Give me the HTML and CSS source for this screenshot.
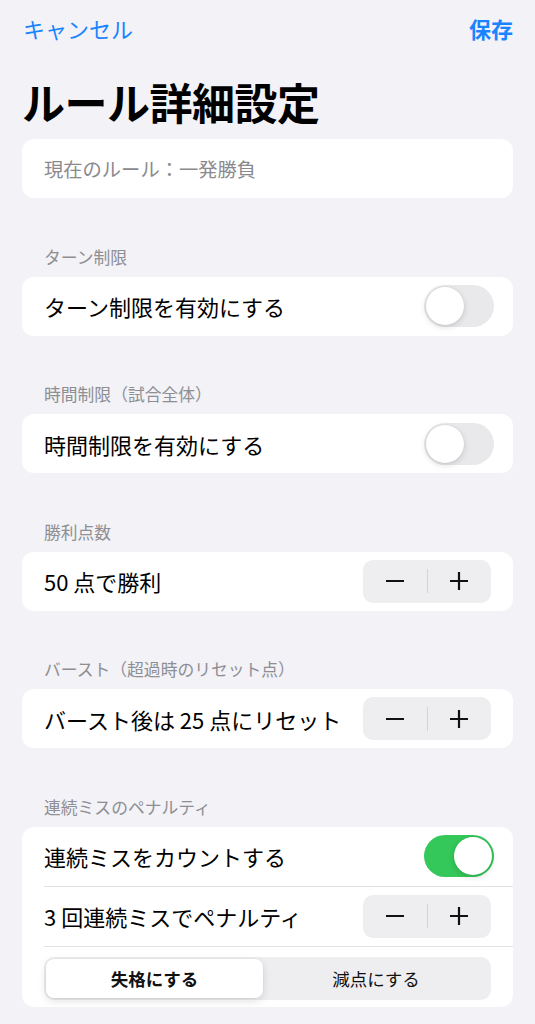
FILE: index.html
```html
<!DOCTYPE html>
<html lang="ja">
<head>
<meta charset="utf-8">
<title>ルール詳細設定</title>
<link rel="stylesheet" href="styles.css">
</head>
<body>
<div class="screen">
  <nav class="nav">
    <span class="nav-btn">キャンセル</span>
    <span class="nav-btn nav-save">保存</span>
  </nav>
  <h1 class="title">ルール詳細設定</h1>

  <div class="card">
    <div class="row"><span class="note">現在のルール：一発勝負</span></div>
  </div>

  <div class="section-label">ターン制限</div>
  <div class="card">
    <div class="row">
      <span class="label">ターン制限を有効にする</span>
      <span class="toggle"><span class="knob"></span></span>
    </div>
  </div>

  <div class="section-label">時間制限（試合全体）</div>
  <div class="card">
    <div class="row">
      <span class="label">時間制限を有効にする</span>
      <span class="toggle"><span class="knob"></span></span>
    </div>
  </div>

  <div class="section-label">勝利点数</div>
  <div class="card">
    <div class="row">
      <span class="label">50 点で勝利</span>
      <span class="stepper">
        <span class="step"><svg width="20" height="20" viewBox="0 0 20 20"><line x1="1" y1="10" x2="19" y2="10"/></svg></span>
        <span class="step-div"></span>
        <span class="step"><svg width="20" height="20" viewBox="0 0 20 20"><line x1="1" y1="10" x2="19" y2="10"/><line x1="10" y1="1" x2="10" y2="19"/></svg></span>
      </span>
    </div>
  </div>

  <div class="section-label">バースト（超過時のリセット点）</div>
  <div class="card">
    <div class="row">
      <span class="label">バースト後は 25 点にリセット</span>
      <span class="stepper">
        <span class="step"><svg width="20" height="20" viewBox="0 0 20 20"><line x1="1" y1="10" x2="19" y2="10"/></svg></span>
        <span class="step-div"></span>
        <span class="step"><svg width="20" height="20" viewBox="0 0 20 20"><line x1="1" y1="10" x2="19" y2="10"/><line x1="10" y1="1" x2="10" y2="19"/></svg></span>
      </span>
    </div>
  </div>

  <div class="section-label">連続ミスのペナルティ</div>
  <div class="card">
    <div class="row row-div">
      <span class="label">連続ミスをカウントする</span>
      <span class="toggle on"><span class="knob"></span></span>
    </div>
    <div class="row row-div">
      <span class="label">3 回連続ミスでペナルティ</span>
      <span class="stepper">
        <span class="step"><svg width="20" height="20" viewBox="0 0 20 20"><line x1="1" y1="10" x2="19" y2="10"/></svg></span>
        <span class="step-div"></span>
        <span class="step"><svg width="20" height="20" viewBox="0 0 20 20"><line x1="1" y1="10" x2="19" y2="10"/><line x1="10" y1="1" x2="10" y2="19"/></svg></span>
      </span>
    </div>
    <div class="seg-row">
      <div class="segmented">
        <span class="seg seg-on">失格にする</span>
        <span class="seg">減点にする</span>
      </div>
    </div>
  </div>
</div>
</body>
</html>
```

FILE: styles.css
```css
* { box-sizing: border-box; }
html, body {
  margin: 0;
  padding: 0;
  background: #f2f2f7;
}
body {
  font-family: "Noto Sans CJK JP", "Noto Sans", sans-serif;
  color: #000;
}
.screen {
  padding: 0 22px;
}
.nav {
  height: 56px;
  display: flex;
  align-items: center;
  justify-content: space-between;
  padding: 0 0 0 1px;
}
.nav-btn {
  font-size: 22px;
  line-height: 28px;
  color: #1a84ff;
}
.nav-save {
  font-weight: 700;
}
.title {
  margin: 20px 0 0 0;
  font-size: 43px;
  line-height: 50px;
  font-weight: 700;
  letter-spacing: -0.5px;
}
.card {
  margin-top: 13px;
  background: #fff;
  border-radius: 12px;
  overflow: hidden;
}
.section-label + .card {
  margin-top: 10px;
}
.row {
  height: 59px;
  display: flex;
  align-items: center;
  justify-content: space-between;
  padding: 0 22px;
}
.row-div {
  height: 60px;
  border-bottom: 1px solid #e3e3e6;
  margin-left: 22px;
  padding-left: 0;
}
.note {
  font-size: 19.3px;
  color: #8a8a8e;
}
.label {
  font-size: 22px;
}
.section-label {
  margin-top: 48.5px;
  padding-left: 22px;
  height: 20px;
  line-height: 20px;
  font-size: 16.8px;
  color: #8e8e93;
}
.toggle {
  width: 70px;
  height: 42px;
  border-radius: 21px;
  background: #e9e9eb;
  margin-right: -3px;
  display: flex;
  align-items: center;
  padding: 2px;
}
.knob {
  width: 38px;
  height: 38px;
  border-radius: 50%;
  background: #fff;
  box-shadow: 0 2px 6px rgba(0,0,0,0.15), 0 0 0 0.5px rgba(0,0,0,0.05);
}
.toggle.on {
  background: #34c759;
  justify-content: flex-end;
}
.stepper {
  width: 128px;
  height: 43px;
  border-radius: 10px;
  background: #eeeef0;
  display: flex;
  align-items: center;
}
.step {
  flex: 1;
  display: flex;
  align-items: center;
  justify-content: center;
}
.step svg line {
  stroke: #111;
  stroke-width: 2.2;
}
.step-div {
  width: 1px;
  height: 24px;
  background: #d4d4d8;
}
.seg-row {
  padding: 10px 22px 7px;
}
.segmented {
  height: 43px;
  border-radius: 10px;
  background: #eeeef0;
  padding: 2px;
  display: flex;
}
.seg {
  flex: 1;
  display: flex;
  align-items: center;
  justify-content: center;
  font-size: 17.5px;
  color: #111;
  border-radius: 8px;
}
.seg-on {
  flex: 0 0 217px;
  background: #fff;
  font-weight: 700;
  box-shadow: 0 3px 8px rgba(0,0,0,0.12), 0 0 0 0.5px rgba(0,0,0,0.04);
}
```
